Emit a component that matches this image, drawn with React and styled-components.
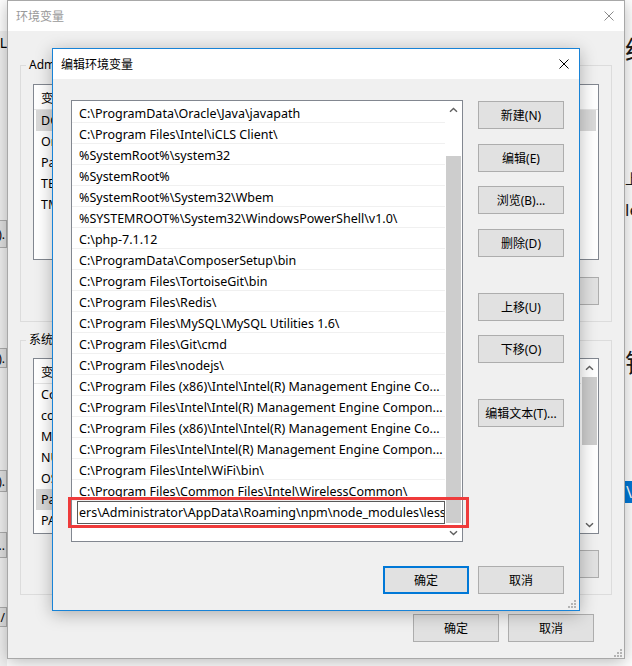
import React from "react";
import styled, { createGlobalStyle } from "styled-components";

const FONT = `"Noto Sans", "Noto Sans CJK SC", sans-serif`;

const GlobalStyle = createGlobalStyle`
  body {
    margin: 0;
    background: #fff;
  }
`;

// 编辑环境变量 list
const pathList = [
  "C:\\ProgramData\\Oracle\\Java\\javapath",
  "C:\\Program Files\\Intel\\iCLS Client\\",
  "%SystemRoot%\\system32",
  "%SystemRoot%",
  "%SystemRoot%\\System32\\Wbem",
  "%SYSTEMROOT%\\System32\\WindowsPowerShell\\v1.0\\",
  "C:\\php-7.1.12",
  "C:\\ProgramData\\ComposerSetup\\bin",
  "C:\\Program Files\\TortoiseGit\\bin",
  "C:\\Program Files\\Redis\\",
  "C:\\Program Files\\MySQL\\MySQL Utilities 1.6\\",
  "C:\\Program Files\\Git\\cmd",
  "C:\\Program Files\\nodejs\\",
  "C:\\Program Files (x86)\\Intel\\Intel(R) Management Engine Co...",
  "C:\\Program Files\\Intel\\Intel(R) Management Engine Compon...",
  "C:\\Program Files (x86)\\Intel\\Intel(R) Management Engine Co...",
  "C:\\Program Files\\Intel\\Intel(R) Management Engine Compon...",
  "C:\\Program Files\\Intel\\WiFi\\bin\\",
  "C:\\Program Files\\Common Files\\Intel\\WirelessCommon\\",
];
const editingText = "ers\\Administrator\\AppData\\Roaming\\npm\\node_modules\\less";

const userVars = [
  { name: "DOCKER_TOOLBOX_INSTALL_PATH", value: "C:\\Program Files\\Docker Toolbox", selected: true },
  { name: "OneDrive", value: "C:\\Users\\Administrator\\OneDrive" },
  { name: "Path", value: "C:\\Users\\Administrator\\AppData\\Roaming\\npm" },
  { name: "TEMP", value: "%USERPROFILE%\\AppData\\Local\\Temp" },
  { name: "TMP", value: "%USERPROFILE%\\AppData\\Local\\Temp" },
];
const systemVars = [
  { name: "ComSpec", value: "C:\\WINDOWS\\system32\\cmd.exe" },
  { name: "configsetroot", value: "C:\\WINDOWS\\ConfigSetRoot" },
  { name: "MOZ_PLUGIN_PATH", value: "C:\\Program Files (x86)\\Foxit Software\\plugins\\" },
  { name: "NUMBER_OF_PROCESSORS", value: "4" },
  { name: "OS", value: "Windows_NT" },
  { name: "Path", value: "C:\\ProgramData\\Oracle\\Java\\javapath;C:\\Program Files\\Intel", selected: true },
  { name: "PATHEXT", value: ".COM;.EXE;.BAT;.CMD;.VBS;.VBE;.JS;.JSE;.WSF;.WSH;.MSC" },
];

//! icons ---------------------------------------
const CloseIcon = ({ color }) => (
  <svg width="10" height="10" viewBox="0 0 10 10">
    <path d="M0.5 0.5 L9.5 9.5 M9.5 0.5 L0.5 9.5" stroke={color} strokeWidth="1" fill="none" />
  </svg>
);
const Chevron = ({ down }) => (
  <svg width="9" height="6" viewBox="0 0 9 6">
    <path
      d={down ? "M1 1.2 L4.5 4.6 L8 1.2" : "M1 4.8 L4.5 1.4 L8 4.8"}
      stroke="#606060"
      strokeWidth="1.4"
      fill="none"
    />
  </svg>
);
const GripIcon = () => (
  <svg width="8" height="8" viewBox="0 0 8 8">
    {[
      [6, 0],
      [3, 3],
      [6, 3],
      [0, 6],
      [3, 6],
      [6, 6],
    ].map(([x, y]) => (
      <rect key={`${x}-${y}`} x={x} y={y} width="2" height="2" fill="#b4b4b4" />
    ))}
  </svg>
);

//! desktop & windows ---------------------------
const Desktop = styled.div`
  position: relative;
  width: 632px;
  height: 666px;
  overflow: hidden;
  background: #fff;
  font-family: ${FONT};
  font-size: 12px;
  color: #000;
`;

const Window = styled.div`
  position: absolute;
  left: ${(p) => p.$x}px;
  top: ${(p) => p.$y}px;
  width: ${(p) => p.$w}px;
  height: ${(p) => p.$h}px;
  box-sizing: border-box;
  border: 1px solid ${(p) => (p.$active ? "#1883d7" : "#a8a8a8")};
  background: #f0f0f0;
  box-shadow: 0 3px 16px rgba(0, 0, 0, 0.28);
  display: flex;
  flex-direction: column;
`;

const TitleBar = styled.div`
  height: 30px;
  flex-shrink: 0;
  background: #fff;
  display: flex;
  align-items: center;
  padding-left: 8px;
`;
const Title = styled.div`
  flex: 1;
  font-size: 12px;
  color: ${(p) => (p.$active ? "#000" : "#999")};
`;
const CloseBox = styled.div`
  width: 30px;
  height: 30px;
  display: flex;
  align-items: center;
  justify-content: center;
`;

const Grip = styled.div`
  position: absolute;
  right: ${(p) => p.$r}px;
  bottom: ${(p) => p.$b}px;
  width: 8px;
  height: 8px;
  display: flex;
`;

const Button = styled.button`
  all: unset;
  box-sizing: border-box;
  width: 86px;
  height: 28px;
  flex-shrink: 0;
  margin-top: ${(p) => p.$mt || 0}px;
  border: ${(p) => (p.$default ? "2px solid #0078d7" : "1px solid #adadad")};
  background: #e1e1e1;
  font-family: ${FONT};
  font-size: 12px;
  color: #000;
  display: flex;
  align-items: center;
  justify-content: center;
  white-space: nowrap;
`;

const ButtonRow = styled.div`
  display: flex;
  justify-content: flex-end;
  gap: 9px;
  margin-top: ${(p) => p.$mt}px;
  margin-right: ${(p) => p.$mr || 0}px;
`;

//! far left window (partly hidden) -------------
const LeftWindow = styled.div`
  position: absolute;
  left: -193px;
  top: 0;
  width: 200px;
  height: 666px;
  background: #f0f0f0;
  display: flex;
  flex-direction: column;
  align-items: flex-end;
`;
const LeftTop = styled.div`
  align-self: stretch;
  height: 31px;
  background: #fff;
`;
const LeftGlyph = styled.div`
  margin-top: 4px;
  font-size: 14px;
  line-height: 16px;
`;
const LeftButton = styled.div`
  width: 80px;
  height: ${(p) => p.$h}px;
  margin-top: ${(p) => p.$mt}px;
  box-sizing: border-box;
  border: 1px solid #adadad;
  background: #e1e1e1;
  display: flex;
  align-items: center;
  justify-content: flex-end;
  padding-right: 1px;
  font-size: 12px;
  overflow: hidden;
`;

//! right window (partly visible) --------------
const RightWindow = styled.div`
  position: absolute;
  left: 625px;
  top: 0;
  width: 80px;
  height: 666px;
  background: #fff;
  display: flex;
  flex-direction: column;
  color: #1a1a1a;
`;
const RightGlyph = styled.div`
  margin-top: ${(p) => p.$mt}px;
  font-size: ${(p) => p.$size}px;
  line-height: ${(p) => p.$size + 4}px;
  white-space: nowrap;
`;
const BlueTile = styled.div`
  margin-top: 103px;
  height: 22px;
  background: #0078d7;
  color: #fff;
  font-size: 16px;
  line-height: 22px;
  padding-left: 1px;
`;

//! outer dialog 环境变量 -----------------------
const OuterBody = styled.div`
  flex: 1;
  padding: 34px 12px 0;
  display: flex;
  flex-direction: column;
`;
const GroupFrame = styled.div`
  border: 1px solid #dcdcdc;
  padding: 0 12px 16px;
  margin-top: ${(p) => p.$mt || 0}px;
  display: flex;
  flex-direction: column;
`;
const GroupLabel = styled.div`
  align-self: flex-start;
  margin: -9px 0 0 -7px;
  padding: 0 3px;
  line-height: 16px;
  background: #f0f0f0;
  white-space: nowrap;
`;
const VarList = styled.div`
  margin-top: ${(p) => p.$mt}px;
  height: 176px;
  box-sizing: border-box;
  border: 1px solid #828790;
  background: #fff;
  display: flex;
  overflow: hidden;
`;
const VarColumn = styled.div`
  flex: 1;
  min-width: 0;
`;
const VarHeader = styled.div`
  height: 25px;
  display: flex;
  align-items: center;
  border-bottom: 1px solid #e5e5e5;
  box-sizing: border-box;
`;
const VarRow = styled.div`
  height: 21px;
  display: flex;
  align-items: center;
  background: ${(p) => (p.$selected ? "#d9d9d9" : "transparent")};
  margin: 0 2px;
`;
const VarCell = styled.div`
  width: ${(p) => p.$w}px;
  flex-shrink: 0;
  padding-left: ${(p) => p.$pad || 5}px;
  white-space: nowrap;
  overflow: hidden;
  font-size: 12.5px;
`;

//! inner dialog 编辑环境变量 --------------------
const InnerBody = styled.div`
  flex: 1;
  padding: 21px 15px 0 18px;
  display: flex;
  flex-direction: column;
`;
const MainRow = styled.div`
  display: flex;
  gap: 15px;
`;
const ListWrap = styled.div`
  position: relative;
  width: 392px;
  height: 442px;
`;
const PathList = styled.div`
  width: 100%;
  height: 100%;
  box-sizing: border-box;
  border: 1px solid #828790;
  background: #fff;
  display: flex;
  overflow: hidden;
`;
const PathRows = styled.div`
  flex: 1;
  min-width: 0;
  padding-top: 1px;
`;
const PathRow = styled.div`
  height: 21px;
  box-sizing: border-box;
  border-bottom: 1px solid #f0f0f0;
  padding-left: 7px;
  line-height: 24px;
  font-size: 12.5px;
  white-space: nowrap;
  overflow: hidden;
`;
const EditBox = styled.div`
  height: 23px;
  margin-left: 5px;
  box-sizing: border-box;
  border: 1px solid #5a5a5a;
  padding-left: 1px;
  line-height: 21px;
  font-size: 12.5px;
  white-space: nowrap;
  overflow: hidden;
`;
const Annotation = styled.div`
  position: absolute;
  left: -3px;
  top: 397px;
  width: 401px;
  height: 31px;
  box-sizing: border-box;
  border: 3px solid #ef3b3b;
  pointer-events: none;
`;
const ButtonColumn = styled.div`
  display: flex;
  flex-direction: column;
`;

//! scrollbar ------------------------------------
const ScrollTrackBar = styled.div`
  width: 17px;
  flex-shrink: 0;
  display: flex;
  flex-direction: column;
  background: #fff;
`;
const ScrollArrow = styled.div`
  height: 17px;
  display: flex;
  align-items: center;
  justify-content: center;
`;
const ScrollTrack = styled.div`
  flex: 1;
`;
const ScrollThumb = styled.div`
  margin: ${(p) => p.$top}px 1px 0;
  height: ${(p) => p.$height}px;
  background: #cdcdcd;
`;

const Scrollbar = ({ top, height }) => (
  <ScrollTrackBar>
    <ScrollArrow>
      <Chevron />
    </ScrollArrow>
    <ScrollTrack>
      <ScrollThumb $top={top} $height={height} />
    </ScrollTrack>
    <ScrollArrow>
      <Chevron down />
    </ScrollArrow>
  </ScrollTrackBar>
);

const VarTable = ({ rows, mt, scroll }) => (
  <VarList $mt={mt}>
    <VarColumn>
      <VarHeader>
        <VarCell $w={170} $pad={7}>
          变量
        </VarCell>
        <VarCell $w={360}>值</VarCell>
      </VarHeader>
      {rows.map((r) => (
        <VarRow key={r.name} $selected={r.selected}>
          <VarCell $w={168}>{r.name}</VarCell>
          <VarCell $w={360}>{r.value}</VarCell>
        </VarRow>
      ))}
    </VarColumn>
    {scroll && <Scrollbar top={1} height={68} />}
  </VarList>
);

const App = () => {
  return (
    <>
      <GlobalStyle />
      <Desktop>
        <LeftWindow>
          <LeftTop />
          <LeftGlyph>L</LeftGlyph>
          <LeftButton $mt={169} $h={28}>).</LeftButton>
          <LeftButton $mt={100} $h={20}>).</LeftButton>
          <LeftButton $mt={102} $h={22}>).</LeftButton>
          <LeftButton $mt={40} $h={26}>...</LeftButton>
          <LeftButton $mt={49} $h={20}>/</LeftButton>
        </LeftWindow>

        <RightWindow>
          <RightGlyph $mt={35} $size={26}>统</RightGlyph>
          <RightGlyph $mt={105} $size={14}>上</RightGlyph>
          <RightGlyph $mt={11} $size={17}>le</RightGlyph>
          <RightGlyph $mt={128} $size={26}>钱</RightGlyph>
          <BlueTile>\</BlueTile>
        </RightWindow>

        {/* 环境变量 */}
        <Window $x={7} $y={0} $w={618} $h={659}>
          <TitleBar>
            <Title>环境变量</Title>
            <CloseBox>
              <CloseIcon color="#8a8a8a" />
            </CloseBox>
          </TitleBar>
          <OuterBody>
            <GroupFrame>
              <GroupLabel>Administrator 的用户变量</GroupLabel>
              <VarTable rows={userVars} mt={11} />
              <ButtonRow $mt={17}>
                <Button>新建(N)...</Button>
                <Button>编辑(E)...</Button>
                <Button>删除(D)</Button>
              </ButtonRow>
            </GroupFrame>
            <GroupFrame $mt={18}>
              <GroupLabel>系统变量(S)</GroupLabel>
              <VarTable rows={systemVars} mt={10} scroll />
              <ButtonRow $mt={16}>
                <Button>新建(W)...</Button>
                <Button>编辑(I)...</Button>
                <Button>删除(L)</Button>
              </ButtonRow>
            </GroupFrame>
            <ButtonRow $mt={19} $mr={18}>
              <Button>确定</Button>
              <Button>取消</Button>
            </ButtonRow>
          </OuterBody>
          <Grip $r={2} $b={1}>
            <GripIcon />
          </Grip>
        </Window>

        {/* 编辑环境变量 */}
        <Window $x={52} $y={48} $w={528} $h={563} $active>
          <TitleBar>
            <Title $active>编辑环境变量</Title>
            <CloseBox>
              <CloseIcon color="#000" />
            </CloseBox>
          </TitleBar>
          <InnerBody>
            <MainRow>
              <ListWrap>
                <PathList>
                  <PathRows>
                    {pathList.map((p, i) => (
                      <PathRow key={i}>{p}</PathRow>
                    ))}
                    <EditBox>{editingText}</EditBox>
                  </PathRows>
                  <Scrollbar top={38} height={367} />
                </PathList>
                <Annotation />
              </ListWrap>
              <ButtonColumn>
                <Button $mt={1}>新建(N)</Button>
                <Button $mt={15}>编辑(E)</Button>
                <Button $mt={14}>浏览(B)...</Button>
                <Button $mt={15}>删除(D)</Button>
                <Button $mt={36}>上移(U)</Button>
                <Button $mt={14}>下移(O)</Button>
                <Button $mt={36}>编辑文本(T)...</Button>
              </ButtonColumn>
            </MainRow>
            <ButtonRow $mt={24}>
              <Button $default>确定</Button>
              <Button>取消</Button>
            </ButtonRow>
          </InnerBody>
          <Grip $r={3} $b={2}>
            <GripIcon />
          </Grip>
        </Window>
      </Desktop>
    </>
  );
};

export default App;
